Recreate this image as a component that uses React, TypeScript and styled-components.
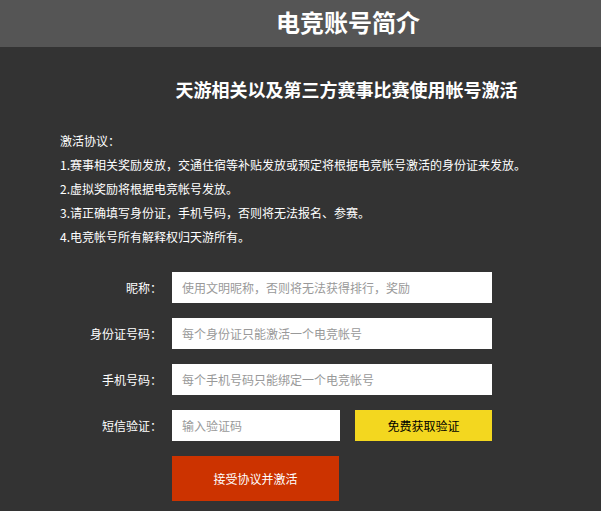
import styled, { createGlobalStyle } from 'styled-components';

const GlobalStyle = createGlobalStyle`
  html, body {
    margin: 0;
    padding: 0;
    background: #333333;
  }
  body {
    font-family: "Noto Sans CJK SC", "Noto Sans", sans-serif;
    color: #ffffff;
  }
  * {
    box-sizing: border-box;
  }
`;

const Page = styled.div`
  width: 601px;
  min-height: 511px;
  background: #333333;
`;

const Header = styled.div`
  height: 47px;
  background: #555555;
  padding-left: 95px;
  text-align: center;
`;

const Title = styled.h1`
  margin: 0;
  font-size: 24px;
  font-weight: bold;
  line-height: 44px;
  color: #ffffff;
`;

const SubTitle = styled.h2`
  margin: 30px 0 0;
  padding-left: 92px;
  text-align: center;
  font-size: 18px;
  font-weight: bold;
  line-height: 24px;
  color: #ffffff;
`;

const Agreement = styled.div`
  margin-top: 28px;
  padding-left: 60px;
  font-size: 12px;
  line-height: 24px;
  color: #ffffff;

  p {
    margin: 0;
  }
`;

const Form = styled.form`
  margin-top: 23px;
  display: flex;
  flex-direction: column;
  gap: 15px;
`;

const Row = styled.div`
  display: flex;
  align-items: center;
  height: 31px;
`;

const Label = styled.label`
  width: 162px;
  margin-right: 10px;
  text-align: right;
  font-size: 12px;
  color: #ffffff;
`;

const Input = styled.input<{ $width?: number }>`
  width: ${(p) => p.$width ?? 320}px;
  height: 31px;
  border: none;
  outline: none;
  padding: 0 10px;
  background: #ffffff;
  font-family: inherit;
  font-size: 12px;
  color: #333;

  &::placeholder {
    color: #999999;
  }
`;

const CodeButton = styled.button`
  margin-left: 15px;
  width: 137px;
  height: 31px;
  border: none;
  background: #f3d71f;
  color: #000000;
  font-family: inherit;
  font-size: 12px;
  cursor: pointer;
`;

const SubmitRow = styled.div`
  padding-left: 172px;
`;

const SubmitButton = styled.button`
  width: 167px;
  height: 45px;
  border: none;
  background: #cc3300;
  color: #ffffff;
  font-family: inherit;
  font-size: 12px;
  cursor: pointer;
`;

const App = () => {
  return (
    <Page>
      <GlobalStyle />
      <Header>
        <Title>电竞账号简介</Title>
      </Header>
      <SubTitle>天游相关以及第三方赛事比赛使用帐号激活</SubTitle>
      <Agreement>
        <p>激活协议：</p>
        <p>1.赛事相关奖励发放，交通住宿等补贴发放或预定将根据电竞帐号激活的身份证来发放。</p>
        <p>2.虚拟奖励将根据电竞帐号发放。</p>
        <p>3.请正确填写身份证，手机号码，否则将无法报名、参赛。</p>
        <p>4.电竞帐号所有解释权归天游所有。</p>
      </Agreement>
      <Form onSubmit={(e) => e.preventDefault()}>
        <Row>
          <Label>昵称：</Label>
          <Input placeholder="使用文明昵称，否则将无法获得排行，奖励" />
        </Row>
        <Row>
          <Label>身份证号码：</Label>
          <Input placeholder="每个身份证只能激活一个电竞帐号" />
        </Row>
        <Row>
          <Label>手机号码：</Label>
          <Input placeholder="每个手机号码只能绑定一个电竞帐号" />
        </Row>
        <Row>
          <Label>短信验证：</Label>
          <Input $width={168} placeholder="输入验证码" />
          <CodeButton type="button">免费获取验证</CodeButton>
        </Row>
        <SubmitRow>
          <SubmitButton type="submit">接受协议并激活</SubmitButton>
        </SubmitRow>
      </Form>
    </Page>
  );
};

export default App;
